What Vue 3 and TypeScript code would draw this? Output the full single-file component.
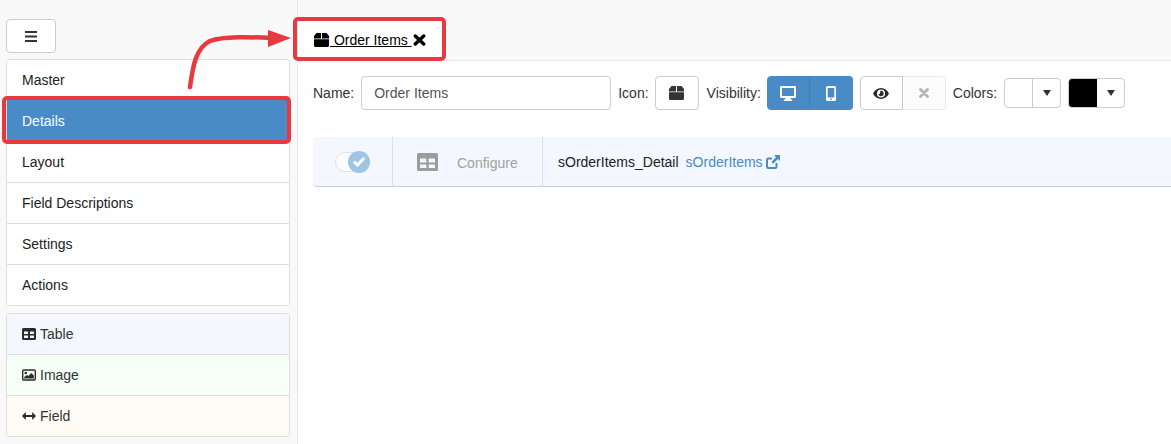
<template>
  <div class="page">
    <!-- Left column: menu button, tabs and field types -->
    <aside class="sidebar">
      <button class="menu-btn" type="button" aria-label="Menu">
        <svg width="12" height="11" viewBox="0 0 12 11"><path d="M0 0h12v2H0zM0 4.500h12v2H0zM0 9h12v2H0z" fill="#333" /></svg>
      </button>
      <ul class="list main-list">
        <li v-for="item in menuItems" :key="item" :class="{ active: item === 'Details' }">{{ item }}</li>
      </ul>
      <ul class="list type-list">
        <li class="type-table">
          <svg class="type-icon" width="14" height="12" viewBox="0 0 14 12"><path fill-rule="evenodd" d="M1.500 0h11A1.500 1.500 0 0 1 14 1.500v9a1.500 1.500 0 0 1-1.500 1.500h-11A1.500 1.500 0 0 1 0 10.500v-9A1.500 1.500 0 0 1 1.500 0zM2 3.500v2.500h4V3.500zM8 3.500v2.500h4V3.500zM2 7.500v2.500h4V7.500zM8 7.500v2.500h4V7.500z" fill="#2b2b2b" /></svg>
          Table
        </li>
        <li class="type-image">
          <svg class="type-icon" width="14" height="12" viewBox="0 0 14 12"><rect x=".7" y="1" width="12.600" height="10" rx="1" fill="none" stroke="#2b2b2b" stroke-width="1.400" /><circle cx="3.800" cy="4" r="1.300" fill="#2b2b2b" /><path d="M2.200 9.500V8L5 6l1.300 1.100L9.300 4l2.500 2.500v3z" fill="#2b2b2b" /></svg>
          Image
        </li>
        <li class="type-field">
          <svg class="type-icon" width="14" height="12" viewBox="0 0 14 12"><path d="M3.800 2 0 6l3.800 4V7h6.400v3L14 6l-3.800-4v3H3.800z" fill="#2b2b2b" /></svg>
          Field
        </li>
      </ul>
    </aside>

    <main class="content">
      <div class="tab-bar">
        <div class="tab">
          <a class="tab-link" href="#">
            <svg width="15" height="14" viewBox="0 0 15 14"><path d="M2.500 0H7v5.500H0V3zM8 0h4.500L15 3v2.500H8zM0 6.200h15v6.300a1.500 1.500 0 0 1-1.500 1.500h-12A1.500 1.500 0 0 1 0 12.500z" fill="#000" /></svg><span> Order Items </span>
          </a>
          <svg class="tab-close" width="13" height="12" viewBox="0 0 13 12"><path d="M2.300 2l8.400 8M10.700 2l-8.400 8" stroke="#000" stroke-width="3.400" stroke-linecap="round" /></svg>
        </div>
      </div>

      <div class="panel">
        <div class="toolbar">
          <label class="name-label">Name:</label>
          <input class="name-input" type="text" value="Order Items" />
          <label class="icon-label">Icon:</label>
          <button class="btn icon-btn" type="button">
            <svg width="15" height="14" viewBox="0 0 15 14"><path d="M2.500 0H7v5.500H0V3zM8 0h4.500L15 3v2.500H8zM0 6.200h15v6.300a1.500 1.500 0 0 1-1.500 1.500h-12A1.500 1.500 0 0 1 0 12.500z" fill="#333" /></svg>
          </button>
          <label class="vis-label">Visibility:</label>
          <div class="btn-group blue">
            <button type="button">
              <svg width="16" height="15" viewBox="0 0 16 15"><path fill-rule="evenodd" d="M1.300 0h13.400A1.300 1.300 0 0 1 16 1.300v9.400a1.300 1.300 0 0 1-1.300 1.300h-4.200l.5 1.500h1.200V15H3.800v-1.500H5l.5-1.500H1.300A1.300 1.300 0 0 1 0 10.700V1.300A1.300 1.300 0 0 1 1.300 0zM2 2v8h12V2z" fill="#fff" /></svg>
            </button>
            <button type="button">
              <svg width="10" height="15" viewBox="0 0 10 15"><path fill-rule="evenodd" d="M1.500 0h7A1.500 1.500 0 0 1 10 1.500v12A1.500 1.500 0 0 1 8.500 15h-7A1.500 1.500 0 0 1 0 13.500v-12A1.500 1.500 0 0 1 1.500 0zM1.700 2v9.500h6.600V2zM5 12.200a.9.900 0 1 0 0 1.800.9.900 0 0 0 0-1.800z" fill="#fff" /></svg>
            </button>
          </div>
          <div class="btn-group plain">
            <button type="button">
              <svg width="16" height="11" viewBox="0 0 16 11"><path fill-rule="evenodd" d="M8 0c3.500 0 6.400 2.100 8 5.500-1.600 3.400-4.500 5.500-8 5.500S1.600 8.900 0 5.500C1.600 2.100 4.500 0 8 0zm0 1.500a4 4 0 1 0 0 8 4 4 0 0 0 0-8zm0 1.300a2.700 2.700 0 1 1-2.600 3.400c1.100.3 2.200-.9 1.800-3.300.3-.1.500-.1.800-.1z" fill="#2b2b2b" /></svg>
            </button>
            <button class="off" type="button">
              <svg width="10" height="10" viewBox="0 0 10 10"><path d="M1.500 1.500l7 7M8.500 1.500l-7 7" stroke="#b3b3b3" stroke-width="2.800" stroke-linecap="round" /></svg>
            </button>
          </div>
          <label class="colors-label">Colors:</label>
          <div class="color-pick">
            <span class="swatch"></span>
            <span class="caret"></span>
          </div>
          <div class="color-pick second">
            <span class="swatch black"></span>
            <span class="caret"></span>
          </div>
        </div>

        <div class="detail-row">
          <div class="cell toggle-cell">
            <span class="toggle">
              <span class="knob">
                <svg width="14" height="11" viewBox="0 0 14 11"><path d="M1.800 5.500l3.600 3.500 6.800-7" fill="none" stroke="#fff" stroke-width="3" /></svg>
              </span>
            </span>
          </div>
          <div class="cell config-cell">
            <svg width="21" height="18" viewBox="0 0 21 18"><path fill-rule="evenodd" d="M1.500 0h18A1.500 1.500 0 0 1 21 1.500v15a1.500 1.500 0 0 1-1.500 1.500h-18A1.500 1.500 0 0 1 0 16.500v-15A1.500 1.500 0 0 1 1.500 0zM3 5.500v4h6.300v-4zM11.700 5.500v4H18v-4zM3 11.500V15h6.300v-3.500zM11.700 11.500V15H18v-3.500z" fill="#9c9c9c" /></svg>
            <span class="config-text">Configure</span>
          </div>
          <div class="cell name-cell">
            <span>sOrderItems_Detail</span>
            <a class="source-link" href="#">
              sOrderItems
              <svg width="14" height="14" viewBox="0 0 14 14"><path d="M10.500 8v3.500a1.500 1.500 0 0 1-1.500 1.500H2.500A1.500 1.500 0 0 1 1 11.500V5a1.500 1.500 0 0 1 1.500-1.500H6" fill="none" stroke="#488bc7" stroke-width="2" /><path d="M8 0h6v6l-2-2-4.800 4.800-1.800-1.800L10 2.200z" fill="#488bc7" /></svg>
            </a>
          </div>
        </div>
      </div>
    </main>

    <!-- Red callouts drawn on top of the screenshot -->
    <div class="callout callout-details"></div>
    <div class="callout callout-tab"></div>
    <svg class="arrow" width="115" height="70" viewBox="0 0 115 70">
      <path d="M10 62C13 40 16 23 30 16c14-5 40-4 62-3" fill="none" stroke="#e8393f" stroke-width="4.500" stroke-linecap="round" />
      <path d="M88 5l23 8-23 9z" fill="#e8393f" />
    </svg>
  </div>
</template>

<script setup lang="ts">
const menuItems: string[] = ['Master', 'Details', 'Layout', 'Field Descriptions', 'Settings', 'Actions']
</script>

<style scoped>
.page {
  position: relative;
  display: flex;
  width: 1171px;
  height: 444px;
  overflow: hidden;
  background: #f9f9f9;
  font-family: "Liberation Sans", Arial, sans-serif;
  font-size: 14px;
  color: #333;
}

.sidebar {
  box-sizing: border-box;
  flex: 0 0 298px;
  padding: 19px 7px 0 6px;
  border-right: 1px solid #e7e7e7;
}

.menu-btn {
  display: flex;
  align-items: center;
  justify-content: center;
  box-sizing: border-box;
  width: 50px;
  height: 34px;
  padding: 0;
  background: #fff;
  border: 1px solid #ccc;
  border-radius: 4px;
}

.list {
  margin: 6px 0 0;
  padding: 0;
  list-style: none;
  border: 1px solid #ddd;
  border-radius: 4px;
  overflow: hidden;
}

.list li {
  display: flex;
  align-items: center;
  box-sizing: border-box;
  height: 41px;
  padding-left: 15px;
  background: #fff;
  border-top: 1px solid #ddd;
}

.list li:first-child {
  height: 40px;
  border-top: 0;
}

.main-list li {
  color: #222;
}

.main-list li.active {
  background: #488bc7;
  border-color: #488bc7;
  color: #fff;
}

.type-list {
  margin-top: 7px;
}

.type-icon {
  margin-right: 4px;
}

.list li.type-table {
  background: #f4f7fe;
}

.list li.type-image {
  background: #f5fff8;
}

.list li.type-field {
  background: #fffcf5;
}

.content {
  flex: 1;
  display: flex;
  flex-direction: column;
  min-width: 0;
}

.tab-bar {
  height: 60px;
  padding-top: 17px;
  box-sizing: border-box;
}

.tab {
  display: flex;
  align-items: center;
  box-sizing: border-box;
  width: 147px;
  height: 43px;
  padding: 2px 0 0 16px;
  background: #fff;
}

.tab-link {
  display: flex;
  align-items: center;
  color: #000;
  text-decoration: underline;
  white-space: pre;
}

.tab-link span {
  margin-left: 1px;
}

.tab-close {
  margin-left: 1px;
}

.panel {
  flex: 1;
  padding: 15px 0 0 15px;
  background: #fff;
  border-top: 1px solid #e7e7e7;
}

.toolbar {
  display: flex;
  align-items: center;
  height: 34px;
}

.name-input {
  box-sizing: border-box;
  width: 250px;
  height: 34px;
  margin-left: 7px;
  padding: 0 12px;
  border: 1px solid #ccc;
  border-radius: 4px;
  color: #555;
  font: inherit;
}

.icon-label {
  margin-left: 7px;
}

.btn {
  display: flex;
  align-items: center;
  justify-content: center;
  box-sizing: border-box;
  height: 34px;
  padding: 0;
  background: #fff;
  border: 1px solid #ccc;
  border-radius: 4px;
}

.icon-btn {
  width: 44px;
  margin-left: 6px;
}

.vis-label {
  margin-left: 8px;
}

.btn-group {
  display: flex;
  box-sizing: border-box;
  width: 86px;
  height: 34px;
  margin-left: 7px;
}

.btn-group.blue {
  margin-left: 6px;
}

.btn-group button {
  display: flex;
  align-items: center;
  justify-content: center;
  box-sizing: border-box;
  width: 43px;
  height: 34px;
  padding: 0;
  border: 1px solid #ccc;
  background: #fff;
}

.btn-group button:first-child {
  border-radius: 4px 0 0 4px;
}

.btn-group button:last-child {
  margin-left: -1px;
  width: 44px;
  border-radius: 0 4px 4px 0;
}

.btn-group.blue button {
  background: #488bc7;
  border-color: #488bc7;
}

.btn-group.blue button:last-child {
  border-left-color: #3f7fb8;
}

.btn-group.plain button.off {
  border-color: #e8e8e8;
  border-left-color: #ccc;
  background: #fcfcfc;
}

.colors-label {
  margin-left: 7px;
}

.color-pick {
  display: flex;
  box-sizing: border-box;
  width: 57px;
  height: 30px;
  margin-left: 7px;
  border: 1px solid #ccc;
  border-radius: 4px;
  overflow: hidden;
}

.swatch {
  flex: 0 0 27px;
  border-right: 1px solid #ccc;
}

.swatch.black {
  background: #000;
  border-right-color: #000;
}

.caret {
  flex: 1;
  display: flex;
  align-items: center;
  justify-content: center;
}

.caret::before {
  content: "";
  width: 0;
  height: 0;
  border-left: 4px solid transparent;
  border-right: 4px solid transparent;
  border-top: 6px solid #333;
}

.detail-row {
  display: flex;
  box-sizing: border-box;
  height: 50px;
  margin-top: 27px;
  background: #f4f7fe;
  border-bottom: 1px solid #ccc;
  border-radius: 4px 0 0 4px;
}

.cell {
  display: flex;
  align-items: center;
  box-sizing: border-box;
  height: 49px;
}

.toggle-cell {
  flex: 0 0 80px;
  padding-left: 22px;
  border-right: 1px solid #dde0e6;
}

.toggle {
  position: relative;
  display: block;
  box-sizing: border-box;
  width: 35px;
  height: 20px;
  background: #fafbfe;
  border: 1px solid #dfe1e6;
  border-radius: 10px;
}

.knob {
  position: absolute;
  top: -2px;
  right: -1px;
  display: flex;
  align-items: center;
  justify-content: center;
  width: 22px;
  height: 22px;
  background: #a0c5e4;
  border-radius: 50%;
}

.config-cell {
  flex: 0 0 150px;
  padding-left: 24px;
  border-right: 1px solid #dde0e6;
}

.config-text {
  margin: 2px 0 0 19px;
  color: #a1a1a1;
}

.name-cell {
  padding-left: 15px;
  color: #222;
}

.source-link {
  display: flex;
  align-items: center;
  gap: 3px;
  margin-left: 7px;
  color: #488bc7;
  text-decoration: none;
}

/* Overlays */
.callout {
  position: absolute;
  box-sizing: border-box;
  border: 4px solid #e8393f;
  border-radius: 5px;
}

.callout-details {
  left: 2px;
  top: 96px;
  width: 289px;
  height: 48px;
}

.callout-tab {
  left: 293px;
  top: 17px;
  width: 153px;
  height: 44px;
}

.arrow {
  position: absolute;
  left: 180px;
  top: 25px;
}
</style>
